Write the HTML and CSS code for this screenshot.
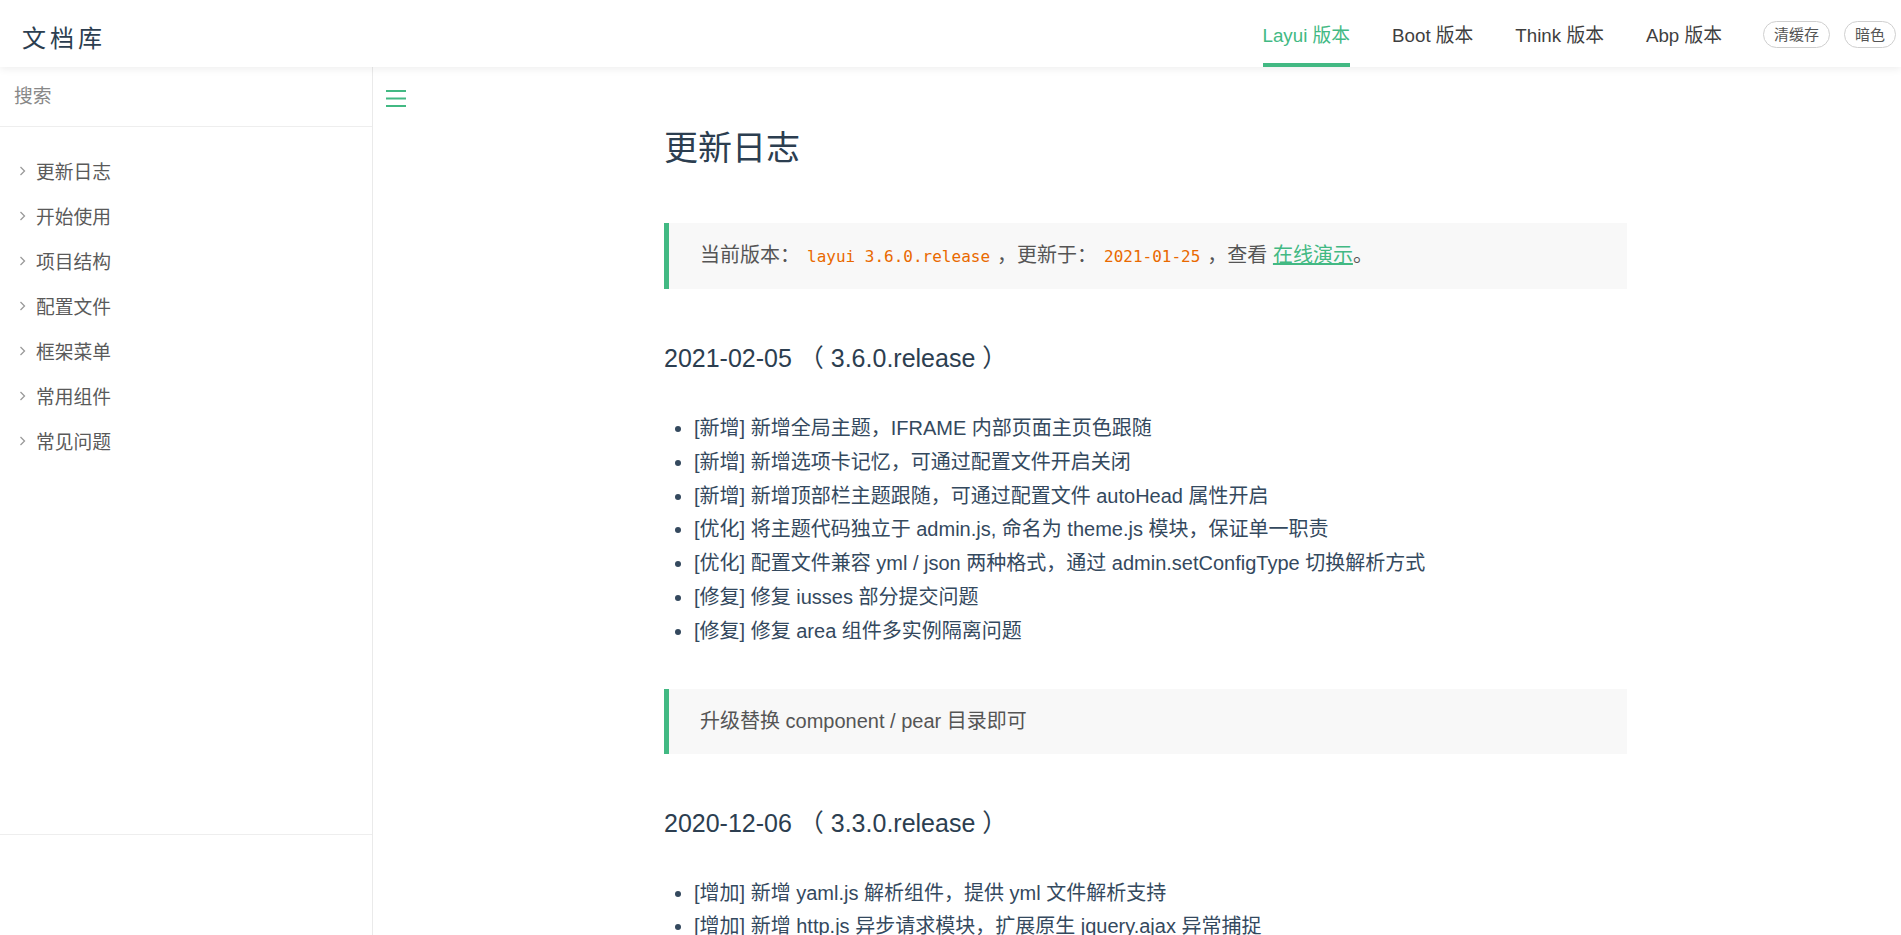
FILE: index.html
```html
<!DOCTYPE html>
<html lang="zh-CN">
<head>
<meta charset="utf-8">
<title>文档库</title>
<link rel="stylesheet" href="styles.css">
</head>
<body>
<header class="topbar">
  <div class="logo">文档库</div>
  <nav class="topnav">
    <ul class="nav-links">
      <li class="nav-item active">Layui 版本</li>
      <li class="nav-item">Boot 版本</li>
      <li class="nav-item">Think 版本</li>
      <li class="nav-item">Abp 版本</li>
    </ul>
    <div class="nav-tools">
      <button class="pill">清缓存</button>
      <button class="pill">暗色</button>
    </div>
  </nav>
</header>
<div class="layout">
  <aside class="sidebar">
    <div class="search"><input type="text" placeholder="搜索"></div>
    <ul class="menu">
      <li><svg class="chev" viewBox="0 0 7 10"><polyline points="1.5,1 5.5,5 1.5,9"/></svg>更新日志</li>
      <li><svg class="chev" viewBox="0 0 7 10"><polyline points="1.5,1 5.5,5 1.5,9"/></svg>开始使用</li>
      <li><svg class="chev" viewBox="0 0 7 10"><polyline points="1.5,1 5.5,5 1.5,9"/></svg>项目结构</li>
      <li><svg class="chev" viewBox="0 0 7 10"><polyline points="1.5,1 5.5,5 1.5,9"/></svg>配置文件</li>
      <li><svg class="chev" viewBox="0 0 7 10"><polyline points="1.5,1 5.5,5 1.5,9"/></svg>框架菜单</li>
      <li><svg class="chev" viewBox="0 0 7 10"><polyline points="1.5,1 5.5,5 1.5,9"/></svg>常用组件</li>
      <li><svg class="chev" viewBox="0 0 7 10"><polyline points="1.5,1 5.5,5 1.5,9"/></svg>常见问题</li>
    </ul>
    <div class="sidebar-foot"></div>
  </aside>
  <main class="main">
    <div class="toolbar">
      <svg class="toggle" viewBox="0 0 20 17"><line x1="0" y1="1" x2="20" y2="1"/><line x1="0" y1="8.5" x2="20" y2="8.5"/><line x1="0" y1="16" x2="20" y2="16"/></svg>
    </div>
    <div class="content-wrap">
      <article class="doc">
        <h1>更新日志</h1>
        <div class="note">当前版本：<code class="code">layui 3.6.0.release</code>，更新于：<code class="code">2021-01-25</code>，查看 <a href="#" class="link">在线演示</a>。</div>
        <h2>2021-02-05 （ 3.6.0.release ）</h2>
        <ul class="changes">
          <li>[新增] 新增全局主题，IFRAME 内部页面主页色跟随</li>
          <li>[新增] 新增选项卡记忆，可通过配置文件开启关闭</li>
          <li>[新增] 新增顶部栏主题跟随，可通过配置文件 autoHead 属性开启</li>
          <li>[优化] 将主题代码独立于 admin.js, 命名为 theme.js 模块，保证单一职责</li>
          <li>[优化] 配置文件兼容 yml / json 两种格式，通过 admin.setConfigType 切换解析方式</li>
          <li>[修复] 修复 iusses 部分提交问题</li>
          <li>[修复] 修复 area 组件多实例隔离问题</li>
        </ul>
        <div class="note">升级替换 component / pear 目录即可</div>
        <h2>2020-12-06 （ 3.3.0.release ）</h2>
        <ul class="changes">
          <li>[增加] 新增 yaml.js 解析组件，提供 yml 文件解析支持</li>
          <li>[增加] 新增 http.js 异步请求模块，扩展原生 jquery.ajax 异常捕捉</li>
        </ul>
      </article>
    </div>
  </main>
</div>
</body>
</html>
```

FILE: styles.css
```css
html, body {
  margin: 0;
  height: 100%;
}

body {
  font-family: "Liberation Sans", "Noto Sans CJK SC", sans-serif;
  background: #fff;
  display: flex;
  flex-direction: column;
  overflow: hidden;
}

/* ---------- top bar ---------- */
.topbar {
  height: 67px;
  flex: none;
  display: flex;
  align-items: stretch;
  padding: 0 5px 0 22px;
  background: #fff;
  box-shadow: 0 2px 8px rgba(0, 0, 0, 0.07);
  position: relative;
  z-index: 2;
}

.logo {
  display: flex;
  align-items: center;
  padding-top: 6px;
  font-size: 24px;
  letter-spacing: 4px;
  color: #2c3e50;
}

.topnav {
  margin-left: auto;
  display: flex;
  align-items: stretch;
}

.nav-links {
  list-style: none;
  margin: 0 41px 0 0;
  padding: 0;
  display: flex;
  gap: 42px;
}

.nav-item {
  display: flex;
  align-items: center;
  box-sizing: border-box;
  padding-top: 3px;
  border-bottom: 4px solid transparent;
  font-size: 18.75px;
  color: #3f3f3f;
}

.nav-item.active {
  color: #42b983;
  border-bottom-color: #42b983;
}

.nav-tools {
  display: flex;
  align-items: center;
  gap: 14px;
  padding-top: 1px;
}

.pill {
  font-family: "Liberation Sans", "Noto Sans CJK SC", sans-serif;
  font-size: 15px;
  height: 27px;
  line-height: 25px;
  padding: 0 10px;
  border: 1px solid #cfcfcf;
  border-radius: 14px;
  background: #fff;
  color: #555;
}

/* ---------- layout ---------- */
.layout {
  flex: 1;
  display: flex;
  min-height: 0;
}

.sidebar {
  width: 372px;
  flex: none;
  border-right: 1px solid #eaeaea;
  display: flex;
  flex-direction: column;
}

.search {
  height: 60px;
  box-sizing: border-box;
  border-bottom: 1px solid #eee;
  display: flex;
  align-items: center;
  padding-left: 14px;
}

.search input {
  border: 0;
  outline: 0;
  padding: 0;
  width: 100%;
  font-family: "Liberation Sans", "Noto Sans CJK SC", sans-serif;
  font-size: 18.75px;
  color: #333;
  background: transparent;
}

.search input::placeholder {
  color: #888;
}

.menu {
  list-style: none;
  margin: 0;
  padding: 21px 0 0;
  flex: 1;
}

.menu li {
  height: 45px;
  display: flex;
  align-items: center;
  padding-left: 19px;
  font-size: 18.75px;
  color: #5a5a5a;
}

.chev {
  width: 7px;
  height: 10px;
  margin-right: 10px;
  fill: none;
  stroke: #9a9a9a;
  stroke-width: 1.3;
}

.sidebar-foot {
  height: 100px;
  flex: none;
  border-top: 1px solid #eee;
}

/* ---------- main ---------- */
.main {
  flex: 1;
  min-width: 0;
  overflow: hidden;
}

.toolbar {
  padding: 23px 0 0 13px;
}

.toggle {
  display: block;
  width: 20px;
  height: 17px;
  stroke: #42b983;
  stroke-width: 2;
}

.content-wrap {
  padding-left: 17px;
}

.doc {
  width: 963px;
  margin: 0 auto;
}

.doc h1 {
  font-size: 34px;
  line-height: 44px;
  font-weight: normal;
  color: #2c3e50;
  margin: 19px 0 53px;
}

.note {
  margin: 40px 0;
  background: #f8f8f8;
  border-left: 5px solid #42b983;
  padding: 20px 0 20px 31px;
  font-size: 20px;
  line-height: 25px;
  color: #555;
}

.code {
  font-family: "DejaVu Sans Mono", "Liberation Mono", monospace;
  font-size: 16px;
  color: #e96900;
  padding: 0 5px;
  margin: 0 2px;
}

.link {
  color: #42b983;
  text-decoration: underline;
}

.doc h2 {
  font-size: 25px;
  line-height: 36px;
  font-weight: normal;
  color: #2c3e50;
  margin: 51px 0 36px;
}

.changes {
  margin: 0 0 40px;
  padding-left: 30px;
  font-size: 20px;
  line-height: 33.8px;
  color: #34495e;
}
```
